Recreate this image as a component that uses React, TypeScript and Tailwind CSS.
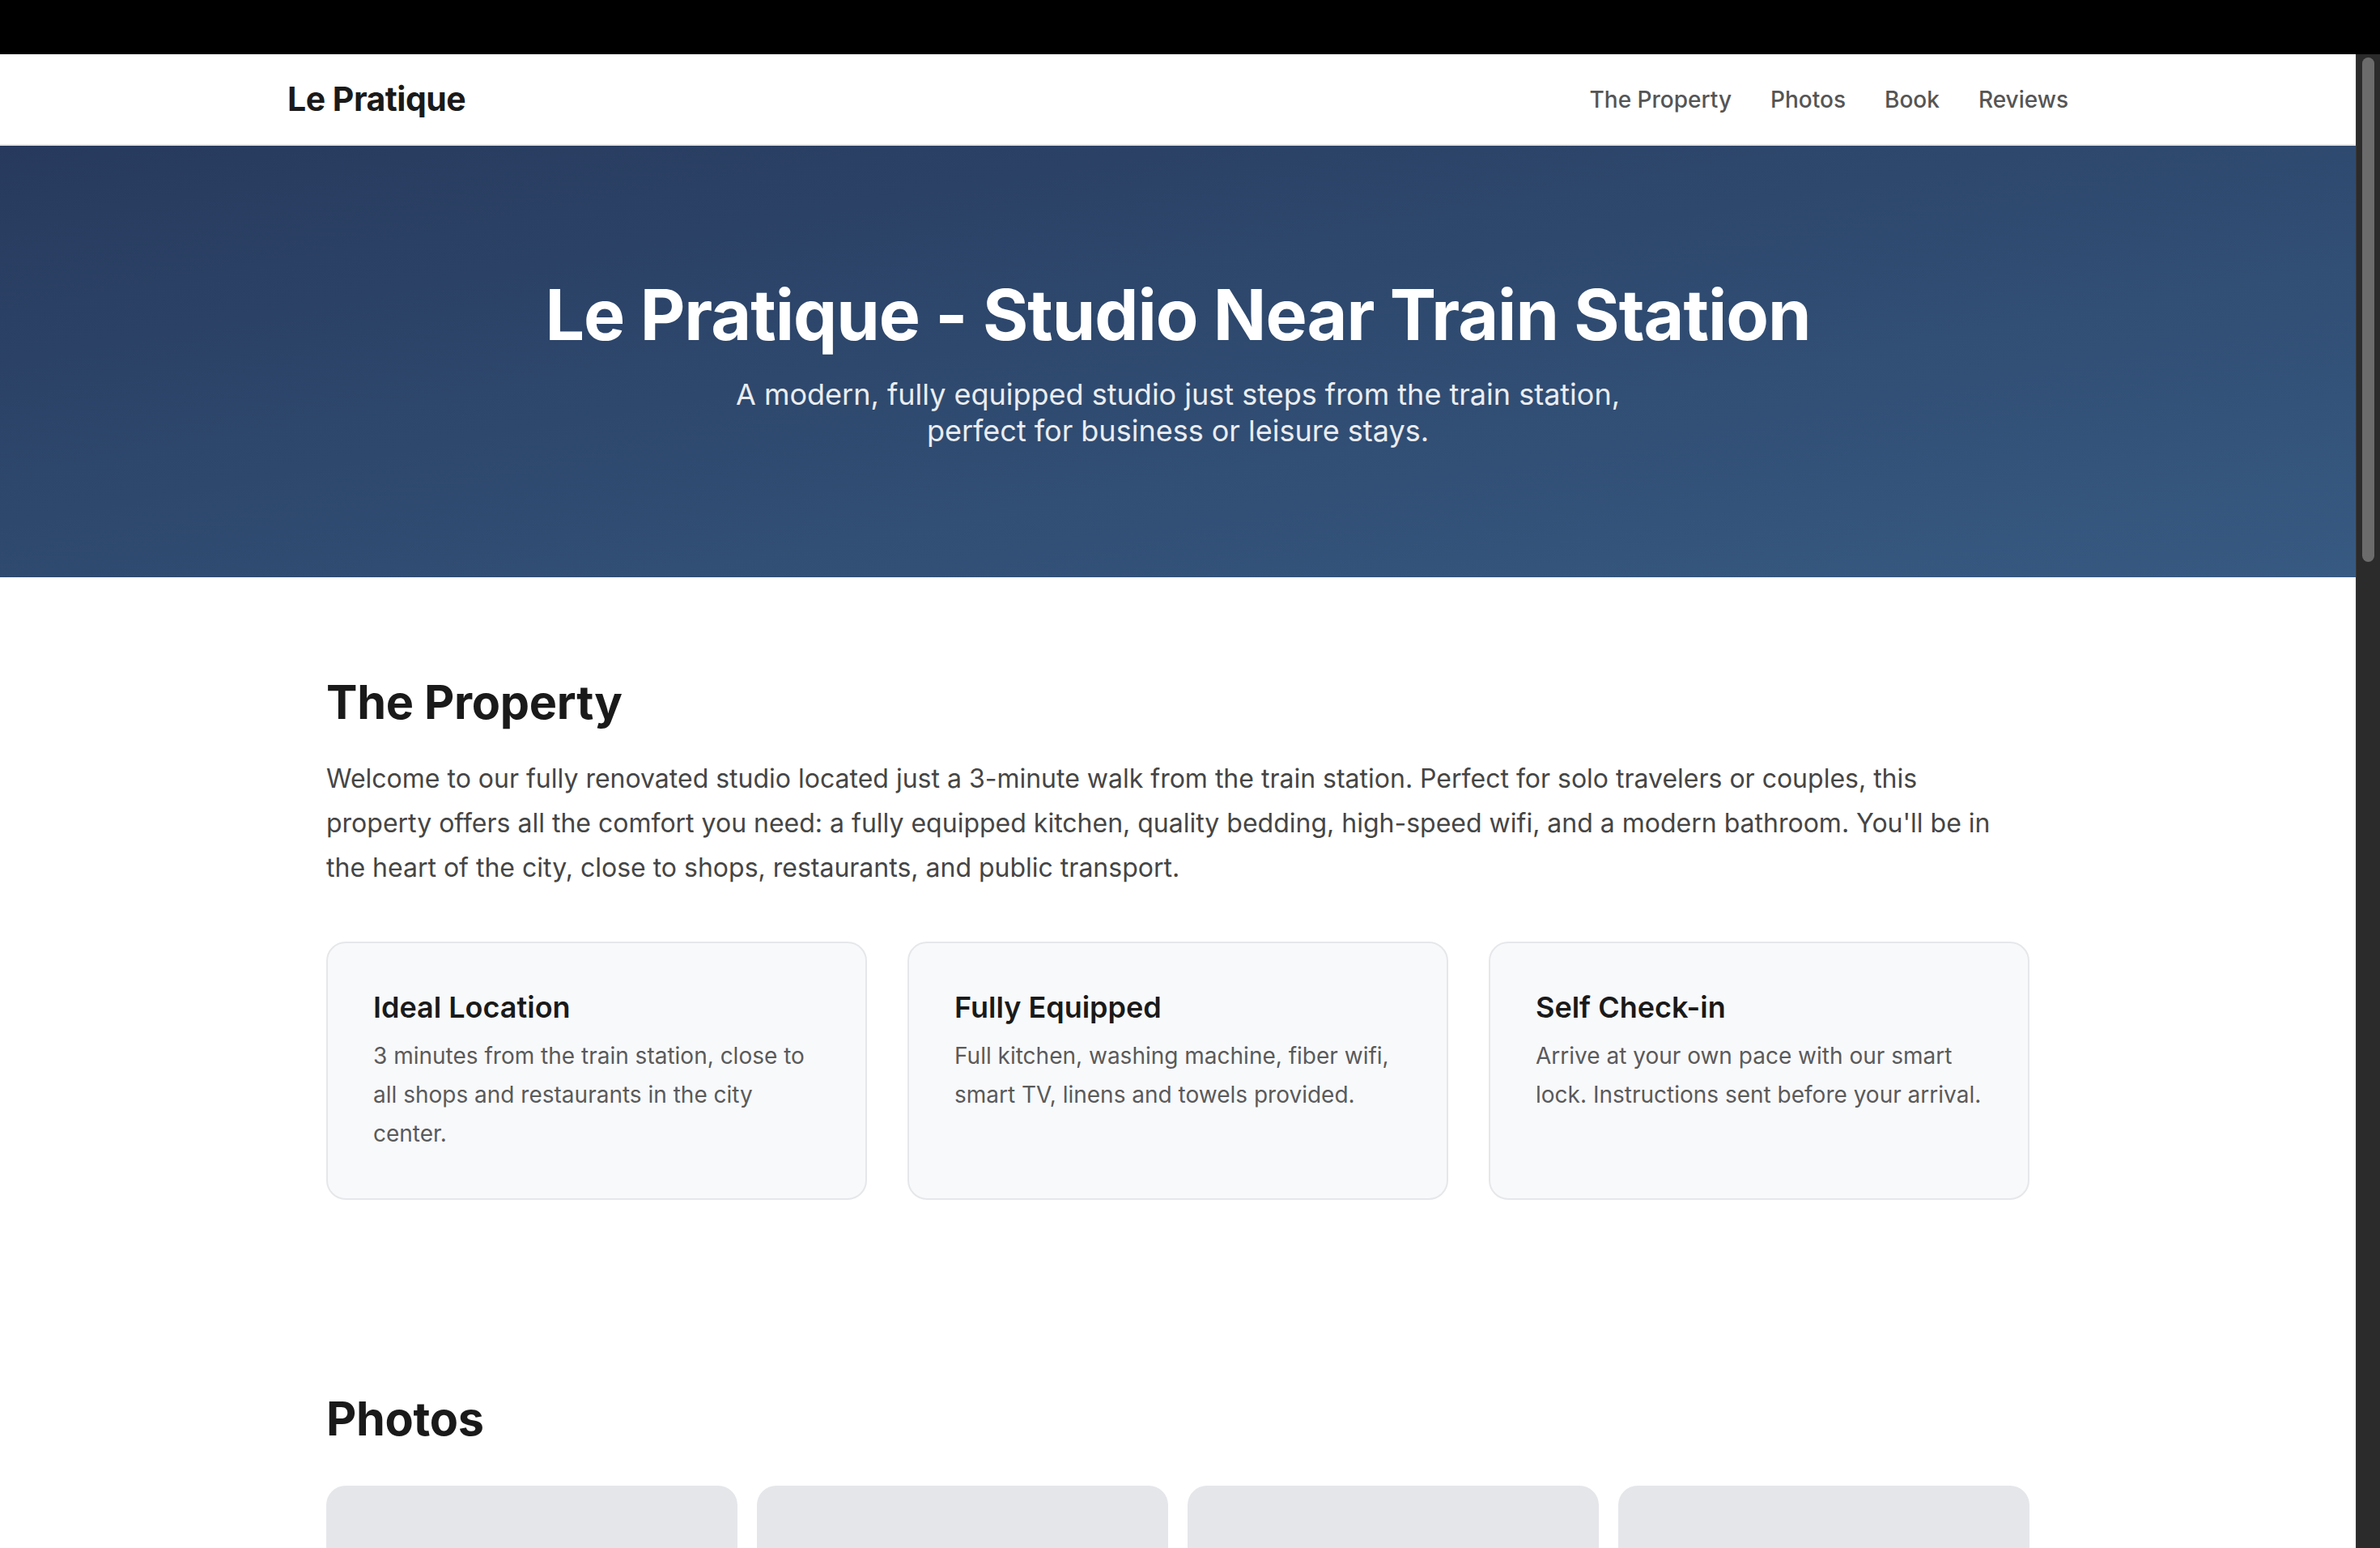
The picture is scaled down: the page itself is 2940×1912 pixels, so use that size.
const NAV_LINKS = ['The Property', 'Photos', 'Book', 'Reviews'];

const FEATURES = [
  {
    title: 'Ideal Location',
    text: '3 minutes from the train station, close to all shops and restaurants in the city center.',
  },
  {
    title: 'Fully Equipped',
    text: 'Full kitchen, washing machine, fiber wifi, smart TV, linens and towels provided.',
  },
  {
    title: 'Self Check-in',
    text: 'Arrive at your own pace with our smart lock. Instructions sent before your arrival.',
  },
];

function FeatureCard({ title, text }: { title: string; text: string }) {
  return (
    <div className="rounded-[24px] border-2 border-[#e6e7ea] bg-[#f8f9fb] p-[56px]">
      <h3 className="mb-[12px] text-[36px] font-semibold leading-[1.3] text-[#1a1a1a]">{title}</h3>
      <p className="text-[28px] leading-[48px] text-[#5a5a5a]">{text}</p>
    </div>
  );
}

export default function App() {
  return (
    <div
      className="flex h-screen flex-col overflow-hidden bg-black"
      style={{ fontFamily: 'Inter, "Noto Sans", sans-serif' }}
    >
      <div className="h-[67px] shrink-0 bg-black" />
      <div className="flex min-h-0 flex-1">
        <div className="min-w-0 flex-1 overflow-hidden bg-white">
          <header className="border-b-2 border-[#e5e5e5] bg-white">
            <div className="mx-auto flex h-[111px] w-[2200px] items-center justify-between">
              <span className="text-[41px] font-bold tracking-[-0.5px] text-[#1a1a1a]">Le Pratique</span>
              <nav className="flex items-center gap-[48px]">
                {NAV_LINKS.map((link) => (
                  <a key={link} href="#" className="text-[28px] font-medium text-[#555555]">
                    {link}
                  </a>
                ))}
              </nav>
            </div>
          </header>

          <section className="bg-gradient-to-br from-[#273a5d] to-[#375a82] px-[48px] py-[158px] text-center text-white">
            <h1 className="mb-[24px] text-[86px] font-bold leading-[1.2] tracking-[-1px]">
              Le Pratique - Studio Near Train Station
            </h1>
            <p className="mx-auto max-w-[1200px] text-[36px] leading-[45px] text-white/90">
              A modern, fully equipped studio just steps from the train station, perfect for business or leisure
              stays.
            </p>
          </section>

          <section className="mx-auto w-[2200px] px-[48px] pb-[118px] pt-[120px]">
            <h2 className="mb-[32px] text-[57.6px] font-bold leading-[1.2] tracking-[-0.3px] text-[#1a1a1a]">
              The Property
            </h2>
            <p className="text-[32px] leading-[55px] text-[#454545]">
              Welcome to our fully renovated studio located just a 3-minute walk from the train station. Perfect
              for solo travelers or couples, this property offers all the comfort you need: a fully equipped
              kitchen, quality bedding, high-speed wifi, and a modern bathroom. You'll be in the heart of the city,
              close to shops, restaurants, and public transport.
            </p>
            <div className="mt-[64px] grid grid-cols-3 gap-[50px]">
              {FEATURES.map((f) => (
                <FeatureCard key={f.title} title={f.title} text={f.text} />
              ))}
            </div>
          </section>

          <section className="mx-auto w-[2200px] px-[48px] pt-[118px]">
            <h2 className="mb-[48px] text-[57.6px] font-bold leading-[1.2] tracking-[-0.3px] text-[#1a1a1a]">
              Photos
            </h2>
            <div className="grid grid-cols-4 gap-[24px]">
              {[0, 1, 2, 3].map((i) => (
                <div key={i} className="aspect-[4/3] rounded-[24px] bg-[#e5e6ea]" />
              ))}
            </div>
          </section>
        </div>

        <div className="relative w-[30px] shrink-0 border-l border-[#3a3a3a] bg-[#2b2b2b]">
          <div className="absolute left-[7px] top-[4px] h-[623px] w-[15px] rounded-full bg-[#6b6b6b]" />
        </div>
      </div>
    </div>
  );
}
